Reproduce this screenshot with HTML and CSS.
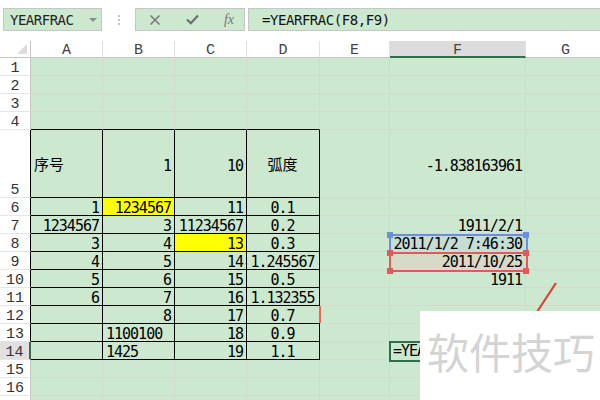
FILE: index.html
```html
<!DOCTYPE html>
<html>
<head>
<meta charset="utf-8">
<link rel="stylesheet" href="styles.css">
</head>
<body>
<div class="toolbar">
  <div class="namebox"><span>YEARFRAC</span><span class="caret"></span></div>
  <div class="sep"><i></i><i></i><i></i></div>
  <div class="btns">
    <svg width="12" height="12" viewBox="0 0 12 12"><path d="M1.5 1.5 L10.5 10.5 M10.5 1.5 L1.5 10.5" stroke="#7a7a7a" stroke-width="1.6" fill="none"/></svg>
    <svg width="13" height="11" viewBox="0 0 13 11"><path d="M1 5.5 L4.8 9.2 L12 1.5" stroke="#6e6e6e" stroke-width="2.2" fill="none"/></svg>
    <span class="fx">fx</span>
  </div>
  <div class="formula">=YEARFRAC(F8,F9)</div>
</div>

<div class="sheet">
  <div class="cr"><span class="tri"></span></div>
  <div class="ch">A</div><div class="ch">B</div><div class="ch">C</div><div class="ch">D</div><div class="ch">E</div><div class="ch sel">F</div><div class="ch">G</div>

  <div class="rh">1</div><div class="c"></div><div class="c"></div><div class="c"></div><div class="c"></div><div class="c"></div><div class="c"></div><div class="c"></div>
  <div class="rh">2</div><div class="c"></div><div class="c"></div><div class="c"></div><div class="c"></div><div class="c"></div><div class="c"></div><div class="c"></div>
  <div class="rh">3</div><div class="c"></div><div class="c"></div><div class="c"></div><div class="c"></div><div class="c"></div><div class="c"></div><div class="c"></div>
  <div class="rh">4</div><div class="c tt"></div><div class="c tt"></div><div class="c tt"></div><div class="c tt"></div><div class="c"></div><div class="c"></div><div class="c"></div>

  <div class="rh tb">5</div><div class="c t v l cjk">序号</div><div class="c t v">1</div><div class="c t v">10</div><div class="c t v m cjk">弧度</div><div class="c"></div><div class="c v">-1.838163961</div><div class="c"></div>

  <div class="rh tb">6</div><div class="c t">1</div><div class="c t y">1234567</div><div class="c t">11</div><div class="c t m">0.1</div><div class="c"></div><div class="c"></div><div class="c"></div>
  <div class="rh tb">7</div><div class="c t">1234567</div><div class="c t">3</div><div class="c t">11234567</div><div class="c t m">0.2</div><div class="c"></div><div class="c">1911/2/1</div><div class="c"></div>
  <div class="rh tb">8</div><div class="c t">3</div><div class="c t">4</div><div class="c t y">13</div><div class="c t m">0.3</div><div class="c"></div><div class="c f8">2011/1/2 7:46:30</div><div class="c"></div>
  <div class="rh tb">9</div><div class="c t">4</div><div class="c t">5</div><div class="c t">14</div><div class="c t m">1.245567</div><div class="c"></div><div class="c f9">2011/10/25</div><div class="c"></div>
  <div class="rh tb">10</div><div class="c t">5</div><div class="c t">6</div><div class="c t">15</div><div class="c t m">0.5</div><div class="c"></div><div class="c">1911</div><div class="c"></div>
  <div class="rh tb">11</div><div class="c t">6</div><div class="c t">7</div><div class="c t">16</div><div class="c t m">1.132355</div><div class="c"></div><div class="c"></div><div class="c"></div>
  <div class="rh tb">12</div><div class="c t"></div><div class="c t">8</div><div class="c t">17</div><div class="c t m">0.7</div><div class="c"></div><div class="c"></div><div class="c"></div>
  <div class="rh tb">13</div><div class="c t"></div><div class="c t l">1100100</div><div class="c t">18</div><div class="c t m">0.9</div><div class="c"></div><div class="c"></div><div class="c"></div>
  <div class="rh tb sel">14</div><div class="c t"></div><div class="c t l">1425</div><div class="c t">19</div><div class="c t m">1.1</div><div class="c"></div><div class="c"></div><div class="c"></div>

  <div class="rh">15</div><div class="c"></div><div class="c"></div><div class="c"></div><div class="c"></div><div class="c"></div><div class="c"></div><div class="c"></div>
  <div class="rh">16</div><div class="c"></div><div class="c"></div><div class="c"></div><div class="c"></div><div class="c"></div><div class="c"></div><div class="c"></div>
  <div class="rh"></div><div class="c"></div><div class="c"></div><div class="c"></div><div class="c"></div><div class="c"></div><div class="c"></div><div class="c"></div>
</div>

<div class="range blue"></div>
<div class="range red"></div>
<span class="knob kb" style="left:387px;top:232px"></span>
<span class="knob kb" style="left:523px;top:232px"></span>
<span class="knob kr" style="left:387px;top:250px"></span>
<span class="knob kr" style="left:523px;top:250px"></span>
<span class="knob kr" style="left:387px;top:268px"></span>
<span class="knob kr" style="left:523px;top:268px"></span>
<div class="redmark"></div>
<div class="editbox">=YEA</div>
<svg class="arrow" width="34" height="40" viewBox="0 0 34 40"><path d="M27 3 L4 38" stroke="#d8403a" stroke-width="2.2" fill="none"/></svg>
<div class="wm">软件技巧</div>
</body>
</html>
```

FILE: styles.css
```css
* { box-sizing: border-box; }
body {
  margin: 0;
  width: 600px;
  height: 400px;
  overflow: hidden;
  background: #fff;
  position: relative;
  font-family: "DejaVu Sans Mono", monospace;
  color: #000;
}
.toolbar {
  display: flex;
  align-items: flex-start;
  height: 41px;
  padding: 8px 0 0 3px;
}
.namebox {
  width: 99px;
  height: 23px;
  background: #cce8cf;
  border: 1px solid #c6c6c6;
  display: flex;
  align-items: center;
  justify-content: space-between;
  padding: 0 4px 0 6px;
  font-size: 14px;
  letter-spacing: -0.5px;
  color: #222;
}
.caret {
  width: 0;
  height: 0;
  border-left: 4px solid transparent;
  border-right: 4px solid transparent;
  border-top: 4px solid #8c8c8c;
}
.sep {
  width: 33px;
  height: 23px;
  display: flex;
  flex-direction: column;
  align-items: center;
  justify-content: center;
  gap: 2px;
}
.sep i {
  display: block;
  width: 2px;
  height: 2px;
  background: #c4c4c4;
}
.btns {
  width: 110px;
  height: 23px;
  background: #cce8cf;
  border: 1px solid #c6c6c6;
  display: flex;
  align-items: center;
  justify-content: space-between;
  padding: 0 10px 0 13px;
}
.fx {
  font-family: "Liberation Serif", serif;
  font-style: italic;
  font-size: 14px;
  color: #777;
}
.formula {
  flex: 1;
  margin: 0 -2px 0 3px;
  height: 23px;
  background: #cce8cf;
  border: 1px solid #c6c6c6;
  display: flex;
  align-items: center;
  padding-left: 13px;
  font-size: 14px;
  letter-spacing: -0.45px;
  color: #111;
}
.sheet {
  display: grid;
  grid-template-columns: 31px 72px 72px 72px 73px 70px 136px 80px;
  grid-template-rows: 17px repeat(4, 18px) 68px repeat(12, 18px);
  width: 606px;
  background: #cce8cf;
}
.cr {
  background: #fff;
  border-right: 1px solid #c6c6c6;
  border-bottom: 1px solid #c6c6c6;
  position: relative;
}
.tri {
  position: absolute;
  right: 3px;
  bottom: 3px;
  width: 0;
  height: 0;
  border-left: 10px solid transparent;
  border-bottom: 10px solid #dcdcdc;
}
.ch {
  background: #fff;
  border-right: 1px solid #e1e1e1;
  border-bottom: 1px solid #c6c6c6;
  display: flex;
  align-items: center;
  justify-content: center;
  padding-top: 2px;
  font-family: "Liberation Mono", monospace;
  font-size: 15px;
  color: #444;
}
.ch.sel {
  background: #dcdcdc;
  border-bottom: 2px solid #2f7048;
  padding-top: 3px;
}
.rh {
  background: #fff;
  border-right: 1px solid #c6c6c6;
  border-bottom: 1px solid #e6e6e6;
  display: flex;
  align-items: flex-end;
  justify-content: center;
  font-family: "Liberation Mono", monospace;
  font-size: 15px;
  line-height: 11px;
  padding-bottom: 1px;
  color: #333;
}
.rh.tb { border-right-color: #000; }
.rh.sel {
  background: #e0e0e0;
  border-right: 2px solid #2f7048;
}
.c {
  border-right: 1px solid #d6d9cf;
  border-bottom: 1px solid #d6d9cf;
  display: flex;
  align-items: flex-end;
  justify-content: flex-end;
  padding: 0 3px 0 2px;
  font-size: 15px;
  letter-spacing: -1px;
  line-height: 13px;
  white-space: nowrap;
}
.c.tt { border-bottom-color: #000; }
.c.t { border-right-color: #000; border-bottom-color: #000; }
.c.v { align-items: center; line-height: 17px; padding-top: 6px; }
.c.v.cjk { padding-top: 0; }
.c.l { justify-content: flex-start; padding-left: 3px; }
.c.m { justify-content: center; }
.c.y { background: #ffff00; }
.cjk {
  font-family: "Noto Sans CJK SC", sans-serif;
  letter-spacing: 0;
}
.c.f8 { background: #c6ddd6; }
.c.f9 { background: #d6dac6; }
.range {
  position: absolute;
  left: 389px;
  width: 139px;
}
.range.blue {
  top: 234px;
  height: 20px;
  border: 2px solid #6b8fd8;
}
.range.red {
  top: 252px;
  height: 20px;
  border: 2px solid #e05a5a;
}
.knob {
  position: absolute;
  width: 6px;
  height: 6px;
}
.kb { background: #6b8fd8; }
.kr { background: #e05a5a; }
.redmark {
  position: absolute;
  left: 319px;
  top: 306px;
  width: 2px;
  height: 17px;
  background: #e8685a;
}
.editbox {
  position: absolute;
  left: 389px;
  top: 341px;
  width: 40px;
  height: 21px;
  border: 2px solid #2f6f4a;
  background: #cce8cf;
  font-size: 15px;
  letter-spacing: -1px;
  line-height: 17px;
  padding-left: 2px;
  white-space: nowrap;
  overflow: hidden;
}
.arrow {
  position: absolute;
  left: 529px;
  top: 280px;
}
.wm {
  position: absolute;
  left: 420px;
  top: 311px;
  width: 180px;
  height: 89px;
  background: #fff;
  font-family: "Noto Sans CJK SC", sans-serif;
  font-size: 42px;
  line-height: 42px;
  color: #d4d4d4;
  padding: 19px 0 0 7px;
  white-space: nowrap;
}
```
